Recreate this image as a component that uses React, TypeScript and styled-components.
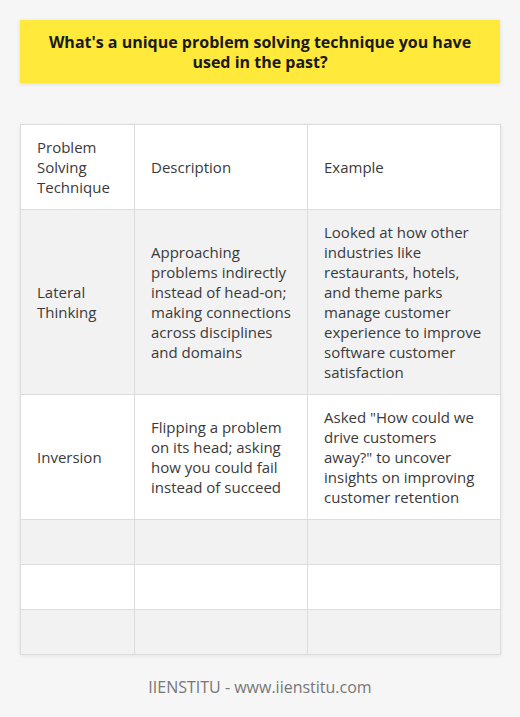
import styled, { createGlobalStyle } from 'styled-components';

/**
 * Table row model
 */
interface Row {
  technique: string;
  description: string;
  example: string;
}

const rows: Row[] = [
  {
    technique: 'Lateral Thinking',
    description: 'Approaching problems indirectly instead of head-on; making connections across disciplines and domains',
    example: 'Looked at how other industries like restaurants, hotels, and theme parks manage customer experience to improve software customer satisfaction',
  },
  {
    technique: 'Inversion',
    description: 'Flipping a problem on its head; asking how you could fail instead of succeed',
    example: 'Asked "How could we drive customers away?" to uncover insights on improving customer retention',
  },
  { technique: '', description: '', example: '' },
  { technique: '', description: '', example: '' },
  { technique: '', description: '', example: '' },
];

/**
 * App component
 */
const App: React.FC = () => (
  <Page>
    <GlobalStyle />
    <TitleBox>What's a unique problem solving technique you have used in the past?</TitleBox>
    <Table>
      <colgroup>
        <col style={ { width: 114 } } />
        <col style={ { width: 173 } } />
        <col style={ { width: 193 } } />
      </colgroup>
      <thead>
        <tr>
          <Cell as='th'>Problem Solving Technique</Cell>
          <Cell as='th'>Description</Cell>
          <Cell as='th'>Example</Cell>
        </tr>
      </thead>
      <tbody>
        { rows.map((row, i) => (
          <BodyRow key={ i } $striped={ i % 2 === 0 }>
            <Cell>{ row.technique }</Cell>
            <Cell>{ row.description }</Cell>
            <Cell>{ row.example }</Cell>
          </BodyRow>
        )) }
      </tbody>
    </Table>
    <Footer>IIENSTITU - www.iienstitu.com</Footer>
  </Page>
);

/**
 * Global page styles
 */
const GlobalStyle = createGlobalStyle`
  body {
    margin: 0;
    background: #f6f6f6;
    font-family: "Open Sans", "Liberation Sans", sans-serif;
  }
`;

/**
 * Page wrapper
 */
const Page = styled.div`
  width: 520px;
  height: 717px;
  padding: 20px 20px 0;
  box-sizing: border-box;
  display: flex;
  flex-direction: column;
`;

/**
 * Yellow question box
 */
const TitleBox = styled.div`
  background: #ffe93b;
  color: #1a1a1a;
  font-weight: 700;
  font-size: 16px;
  line-height: 20px;
  text-align: center;
  padding: 12px 20px 11px;
  box-shadow: 0 1px 4px rgba(0, 0, 0, 0.12);
`;

/**
 * Data table
 */
const Table = styled.table`
  margin-top: 41px;
  width: 480px;
  table-layout: fixed;
  border-collapse: collapse;
  background: #fff;
  box-shadow: 0 1px 4px rgba(0, 0, 0, 0.08);
  font-size: 15px;
  line-height: 20px;
  color: #3a3a3a;
`;

/**
 * Body row with optional stripe
 */
const BodyRow = styled.tr<{ $striped: boolean }>`
  background: ${ p => p.$striped ? '#f2f2f2' : '#ffffff' };
  height: 45px;
`;

/**
 * Table cell
 */
const Cell = styled.td`
  border: 1px solid #dcdcdc;
  padding: 12px 16px;
  text-align: left;
  vertical-align: middle;
  font-weight: 400;
`;

/**
 * Footer caption
 */
const Footer = styled.div`
  margin-top: 22px;
  text-align: center;
  font-size: 16px;
  line-height: 20px;
  color: #777;
`;

export default App;
